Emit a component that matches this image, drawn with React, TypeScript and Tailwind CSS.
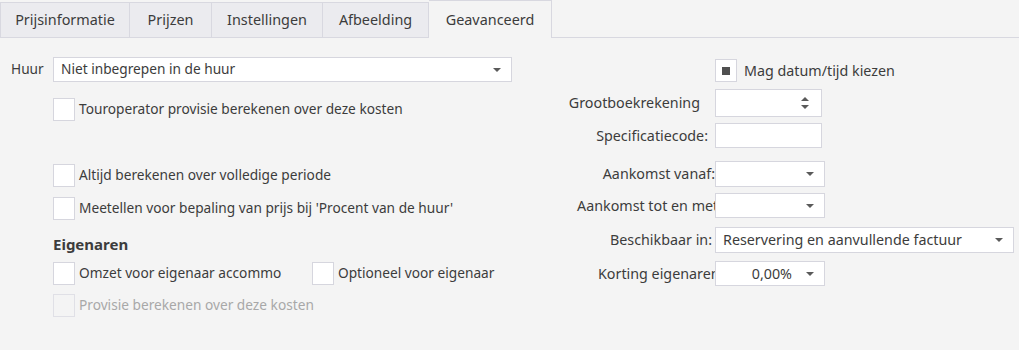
import React from 'react'

const Arrow = () => (
  <svg width="8" height="4" viewBox="0 0 8 4" className="shrink-0">
    <path d="M0 0 H8 L4 4 Z" fill="#5a5a5a" />
  </svg>
)

const Check: React.FC<{ disabled?: boolean; mixed?: boolean }> = ({ disabled, mixed }) => (
  <div
    className={`w-[22px] h-[23px] shrink-0 border flex items-center justify-center ${
      disabled ? 'border-[#e0e0e6] bg-[#f4f4f4]' : 'border-[#d6d6de] bg-white'
    }`}
  >
    {mixed && <div className="w-[8px] h-[8px] bg-[#505050]" />}
  </div>
)

const tabs = [
  { label: 'Prijsinformatie', w: 'w-[130px]' },
  { label: 'Prijzen', w: 'w-[82px]' },
  { label: 'Instellingen', w: 'w-[111px]' },
  { label: 'Afbeelding', w: 'w-[106px]' },
]

const App: React.FC = () => {
  return (
    <div
      className="w-[1019px] h-[350px] bg-[#f4f4f4] text-[#3c3c3c] text-[13.7px] overflow-hidden"
      style={{ fontFamily: '"Noto Sans", "Open Sans", sans-serif' }}
    >
      {/* tabs */}
      <div className="flex h-[38px] text-[14.4px]">
        {tabs.map((t) => (
          <div
            key={t.label}
            className={`${t.w} mt-[2px] h-[36px] border border-l-0 first:border-l border-[#d8d8e0] bg-[#ebebef] flex items-center justify-center`}
          >
            {t.label}
          </div>
        ))}
        <div className="w-[123px] h-[38px] border border-b-0 border-l-0 border-[#d8d8e0] bg-[#f4f4f4] flex items-center justify-center">
          Geavanceerd
        </div>
        <div className="flex-1 border-b border-[#d8d8e0]" />
      </div>

      <div className="flex">
        {/* left column */}
        <div className="w-[560px] pl-[11px] pt-[19px]">
          <div className="flex items-center h-[25px]">
            <div className="w-[42px]">Huur</div>
            <div className="w-[459px] h-[25px] bg-white border border-[#d6d6de] flex items-center justify-between pl-[7px] pr-[10px]">
              <span>Niet inbegrepen in de huur</span>
              <Arrow />
            </div>
          </div>
          <div className="pl-[42px]">
            <div className="flex items-center gap-[4px] mt-[16px]">
              <Check />
              <span>Touroperator provisie berekenen over deze kosten</span>
            </div>
            <div className="flex items-center gap-[4px] mt-[43px]">
              <Check />
              <span>Altijd berekenen over volledige periode</span>
            </div>
            <div className="flex items-center gap-[4px] mt-[10px]">
              <Check />
              <span>Meetellen voor bepaling van prijs bij 'Procent van de huur'</span>
            </div>
            <div className="mt-[14px] h-[20px] flex items-center font-bold text-[15px]">Eigenaren</div>
            <div className="flex items-center mt-[8px]">
              <div className="flex items-center gap-[4px] w-[259px]">
                <Check />
                <span>Omzet voor eigenaar accommo</span>
              </div>
              <div className="flex items-center gap-[4px]">
                <Check />
                <span>Optioneel voor eigenaar</span>
              </div>
            </div>
            <div className="flex items-center gap-[4px] mt-[9px] text-[#a8a8a8]">
              <Check disabled />
              <span>Provisie berekenen over deze kosten</span>
            </div>
          </div>
        </div>

        {/* right column */}
        <div className="pt-[21px] flex flex-col text-[14.3px]">
          <div className="flex items-center">
            <div className="w-[155px]" />
            <div className="flex items-center gap-[7px]">
              <Check mixed />
              <span>Mag datum/tijd kiezen</span>
            </div>
          </div>

          <div className="flex items-center mt-[7px]">
            <div className="w-[155px] flex justify-end pr-[15px] whitespace-nowrap">Grootboekrekening</div>
            <div className="w-[107px] h-[28px] bg-white border border-[#d6d6de] flex items-center justify-end pr-[12px]">
              <svg width="8" height="14" viewBox="0 0 8 14">
                <path d="M0 5 H8 L4 1 Z" fill="#5a5a5a" />
                <path d="M0 9 H8 L4 13 Z" fill="#5a5a5a" />
              </svg>
            </div>
          </div>

          <div className="flex items-center mt-[6px]">
            <div className="w-[155px] flex justify-end pr-[7px] whitespace-nowrap">Specificatiecode:</div>
            <div className="w-[107px] h-[25px] bg-white border border-[#d6d6de]" />
          </div>

          <div className="flex items-center mt-[13px]">
            <div className="w-[155px] flex justify-end whitespace-nowrap">Aankomst vanaf:</div>
            <div className="w-[110px] h-[26px] bg-white border border-[#d6d6de] flex items-center justify-end pr-[10px]">
              <Arrow />
            </div>
          </div>

          <div className="flex items-center mt-[6px]">
            <div className="w-[155px] pl-[17px] overflow-hidden whitespace-nowrap">Aankomst tot en met</div>
            <div className="w-[110px] h-[25px] bg-white border border-[#d6d6de] flex items-center justify-end pr-[10px]">
              <Arrow />
            </div>
          </div>

          <div className="flex items-center mt-[9px]">
            <div className="w-[155px] flex justify-end pr-[3px] whitespace-nowrap">Beschikbaar in:</div>
            <div className="w-[299px] h-[26px] bg-white border border-[#d6d6de] flex items-center justify-between pl-[7px] pr-[10px]">
              <span>Reservering en aanvullende factuur</span>
              <Arrow />
            </div>
          </div>

          <div className="flex items-center mt-[8px]">
            <div className="w-[155px] pl-[38px] overflow-hidden whitespace-nowrap">Korting eigenaren</div>
            <div className="w-[110px] h-[25px] bg-white border border-[#d6d6de] flex items-center justify-end pr-[10px] gap-[14px]">
              <span>0,00%</span>
              <Arrow />
            </div>
          </div>
        </div>
      </div>
    </div>
  )
}

export default App
